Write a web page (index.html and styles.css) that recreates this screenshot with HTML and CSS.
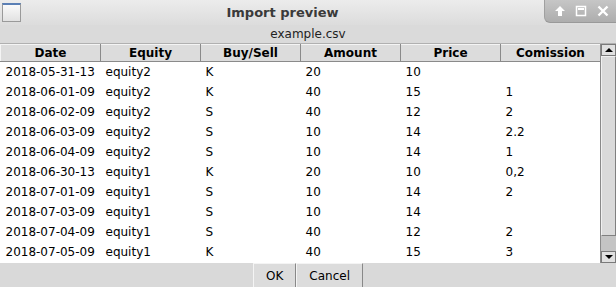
FILE: index.html
```html
<!DOCTYPE html>
<html lang="en">
<head>
    <meta charset="UTF-8">
    <title>Import preview</title>
    <link rel="stylesheet" href="styles.css">
</head>
<body>
    <div class="window">
        <div class="titlebar">
            <div class="app-icon"></div>
            <div class="title">Import preview</div>
            <div class="controls">
                <svg width="12" height="12" viewBox="0 0 12 12">
                    <path d="M6 1 L11 6 L8 6 L8 11 L4 11 L4 6 L1 6 Z" fill="#fff"/>
                </svg>
                <svg width="12" height="12" viewBox="0 0 12 12">
                    <rect x="1.5" y="1.5" width="9" height="9" fill="none" stroke="#fff" stroke-width="1.5"/>
                    <rect x="3" y="3" width="6" height="2" fill="#fff"/>
                </svg>
                <svg width="12" height="12" viewBox="0 0 12 12">
                    <path d="M1.5 1.5 L10.5 10.5 M10.5 1.5 L1.5 10.5" stroke="#fff" stroke-width="2.4"/>
                </svg>
            </div>
        </div>

        <div class="file-label">example.csv</div>

        <div class="table-area">
            <div class="table-wrap">
                <table class="preview">
                    <thead>
                        <tr>
                            <th>Date</th>
                            <th>Equity</th>
                            <th>Buy/Sell</th>
                            <th>Amount</th>
                            <th>Price</th>
                            <th>Comission</th>
                        </tr>
                    </thead>
                    <tbody id="rows"></tbody>
                </table>
            </div>
            <div class="scrollbar">
                <div class="sb-button"><span class="arrow-up"></span></div>
                <div class="sb-track">
                    <div class="sb-thumb"></div>
                </div>
                <div class="sb-button"><span class="arrow-down"></span></div>
            </div>
        </div>

        <div class="buttons">
            <button>OK</button>
            <button>Cancel</button>
        </div>
    </div>

    <script>
        const data = [
            ['2018-05-31-13', 'equity2', 'K', '20', '10', ''],
            ['2018-06-01-09', 'equity2', 'K', '40', '15', '1'],
            ['2018-06-02-09', 'equity2', 'S', '40', '12', '2'],
            ['2018-06-03-09', 'equity2', 'S', '10', '14', '2.2'],
            ['2018-06-04-09', 'equity2', 'S', '10', '14', '1'],
            ['2018-06-30-13', 'equity1', 'K', '20', '10', '0,2'],
            ['2018-07-01-09', 'equity1', 'S', '10', '14', '2'],
            ['2018-07-03-09', 'equity1', 'S', '10', '14', ''],
            ['2018-07-04-09', 'equity1', 'S', '40', '12', '2'],
            ['2018-07-05-09', 'equity1', 'K', '40', '15', '3']
        ];
        const rows = document.getElementById('rows');
        rows.innerHTML = data
            .map(r => '<tr>' + r.map(c => `<td>${c}</td>`).join('') + '</tr>')
            .join('');
    </script>
</body>
</html>
```

FILE: styles.css
```css
body {
    margin: 0;
    font-family: "DejaVu Sans", sans-serif;
    font-size: 12px;
    color: #000;
    background-color: #d9d9d9;
}
.window {
    width: 616px;
    height: 287px;
    display: flex;
    flex-direction: column;
    overflow: hidden;
}
.titlebar {
    height: 25px;
    display: flex;
    align-items: center;
    background: linear-gradient(#ececec, #dcdcdc);
}
.app-icon {
    width: 17px;
    height: 16px;
    margin-left: 2px;
    margin-top: -1px;
    border: 1px solid #9a9a9a;
    border-top: 2px solid #5a7fb5;
    background: linear-gradient(#fafafa, #e2e2e2);
}
.title {
    flex: 1;
    text-align: center;
    font-weight: bold;
    font-size: 13px;
    color: #3a3a3a;
    margin-top: -1px;
}
.controls {
    width: 72px;
    height: 23px;
    align-self: flex-start;
    display: flex;
    align-items: center;
    justify-content: space-around;
    padding: 0 2px 0 4px;
    box-sizing: border-box;
    background: linear-gradient(#c6c6c6, #adadad);
    border-left: 1px solid #a0a0a0;
    border-bottom: 1px solid #999;
    border-bottom-left-radius: 6px;
}
.file-label {
    height: 18px;
    line-height: 18px;
    text-align: center;
    color: #222;
    background-color: #dadada;
}
.table-area {
    display: flex;
    height: 219px;
    background-color: #fff;
    border-top: 1px solid #b0b0b0;
}
.table-wrap {
    width: 600px;
    overflow: hidden;
}
.preview {
    border-collapse: collapse;
    table-layout: fixed;
    width: 600px;
}
.preview th {
    width: 100px;
    height: 17px;
    padding: 0;
    font-weight: bold;
    font-size: 12px;
    background-color: #dcdcdc;
    border-top: 1px solid #f4f4f4;
    border-left: 1px solid #f4f4f4;
    border-right: 1px solid #8a8a8a;
    border-bottom: 1px solid #8a8a8a;
    box-sizing: border-box;
}
.preview td {
    height: 20px;
    padding: 0 0 0 5px;
    white-space: nowrap;
    overflow: hidden;
}
.scrollbar {
    width: 16px;
    display: flex;
    flex-direction: column;
    background-color: #c0c0c0;
    border-left: 1px solid #8a8a8a;
    box-sizing: border-box;
}
.sb-button {
    height: 10px;
    display: flex;
    align-items: center;
    justify-content: center;
    background-color: #e0e0e0;
    border: 1px solid #7a7a7a;
}
.arrow-up {
    width: 0;
    height: 0;
    border-left: 4px solid transparent;
    border-right: 4px solid transparent;
    border-bottom: 4px solid #000;
}
.arrow-down {
    width: 0;
    height: 0;
    border-left: 4px solid transparent;
    border-right: 4px solid transparent;
    border-top: 4px solid #000;
}
.sb-track {
    flex: 1;
    background-color: #c4c4c4;
}
.sb-thumb {
    height: 180px;
    background-color: #dadada;
    border: 1px solid #808080;
    border-top-color: #f0f0f0;
    border-left-color: #f0f0f0;
    box-sizing: border-box;
}
.buttons {
    flex: 1;
    display: flex;
    justify-content: center;
    align-items: flex-end;
    background-color: #d9d9d9;
}
button {
    font-family: "DejaVu Sans", sans-serif;
    font-size: 12px;
    height: 24px;
    padding: 0 12px;
    color: #000;
    background-color: #dcdcdc;
    border: 1px solid #f4f4f4;
    border-right-color: #888;
    border-bottom: none;
    border-radius: 0;
}
```
